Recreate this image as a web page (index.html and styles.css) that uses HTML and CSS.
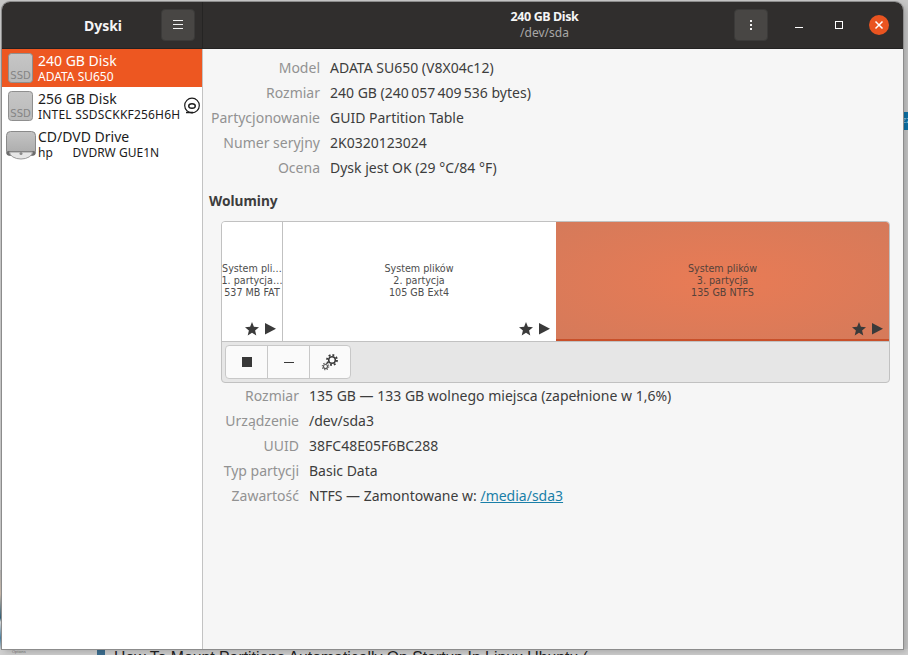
FILE: index.html
```html
<!DOCTYPE html>
<html lang="pl">
<head>
<meta charset="utf-8">
<title>Dyski</title>
<link rel="stylesheet" href="styles.css">
</head>
<body>
<div class="desktop">
  <div class="strip-blue">zz</div>
  <div class="strip-left"></div>
  <div class="strip-web"><span class="web-tools">Options</span><span class="web-title">How To Mount Partitions Automatically On Startup In Linux Ubuntu (</span></div>
  <div class="window">
    <header class="titlebar">
      <div class="tb-left">
        <span class="tb-name">Dyski</span>
        <button class="tb-btn">
          <svg width="16" height="16" viewBox="0 0 16 16"><path d="M3 3.500h10M3 7.500h10M3 11.500h10" stroke="#f2f2f2" stroke-width="1"/></svg>
        </button>
      </div>
      <div class="tb-right">
        <div class="tb-title"><div class="tb-main">240 GB Disk</div><div class="tb-sub">/dev/sda</div></div>
        <button class="tb-btn">
          <svg width="16" height="16" viewBox="0 0 16 16"><path d="M7 3h2v2H7zM7 7h2v2H7zM7 11h2v2H7z" fill="#f2f2f2"/></svg>
        </button>
        <div class="wm">
          <svg width="16" height="16" viewBox="0 0 16 16"><path d="M4 10.500h8" stroke="#fff" stroke-width="1"/></svg>
          <svg width="16" height="16" viewBox="0 0 16 16"><rect x="4.500" y="4.500" width="7" height="7" fill="none" stroke="#fff" stroke-width="1"/></svg>
          <span class="wm-close"><svg width="20" height="20" viewBox="0 0 20 20"><path d="M6.500 6.500l7 7M13.500 6.500l-7 7" stroke="#fff" stroke-width="1.500"/></svg></span>
        </div>
      </div>
    </header>
    <div class="panes">
      <aside class="sidebar">
        <div class="drive selected">
          <svg class="ic" width="30" height="30" viewBox="0 0 30 30"><defs><linearGradient id="g1" x1="0" y1="0" x2="0" y2="1"><stop offset="0" stop-color="#c6c6c6"/><stop offset="1" stop-color="#b9b9b9"/></linearGradient></defs><rect x="3.500" y=".5" width="24" height="29" rx="3" fill="url(#g1)" stroke="#8f8f8f"/><text x="15.500" y="26" text-anchor="middle" class="ssd">SSD</text></svg>
          <div class="dtext"><div class="d1">240 GB Disk</div><div class="d2">ADATA SU650</div></div>
        </div>
        <div class="drive">
          <svg class="ic" width="30" height="30" viewBox="0 0 30 30"><rect x="3.500" y=".5" width="24" height="29" rx="3" fill="url(#g1)" stroke="#8f8f8f"/><text x="15.500" y="26" text-anchor="middle" class="ssd">SSD</text></svg>
          <div class="dtext"><div class="d1">256 GB Disk</div><div class="d2 d2-wide">INTEL SSDSCKKF256H6H</div></div>
          <svg class="spin" width="18" height="18" viewBox="0 0 18 18"><circle cx="9" cy="8.500" r="7.300" fill="none" stroke="#1c1c1c" stroke-width="1.200"/><ellipse cx="9" cy="9" rx="3.300" ry="2.300" fill="none" stroke="#1c1c1c" stroke-width="1.400"/><path d="M3 15.500h7" stroke="#1c1c1c" stroke-width="1.300"/></svg>
        </div>
        <div class="drive">
          <svg class="ic ic-cd" width="32" height="32" viewBox="0 0 32 32"><defs><linearGradient id="g2" x1="0" y1="0" x2="0" y2="1"><stop offset="0" stop-color="#c4c4c4"/><stop offset="1" stop-color="#aaa"/></linearGradient></defs><rect x="1.500" y="3.500" width="29" height="24" rx="4" fill="url(#g2)" stroke="#8a8a8a"/><rect x="1.500" y="23" width="29" height="4.500" rx="2" fill="#6d6d6d"/><path d="M4.500 24A11.500 7 0 0 0 27.500 24z" fill="#e6e6e6" stroke="#9a9a9a"/><circle cx="16" cy="25.500" r="1.500" fill="#8a8a8a"/></svg>
          <div class="dtext"><div class="d1">CD/DVD Drive</div><div class="d2 pre">hp      DVDRW GUE1N</div></div>
        </div>
      </aside>
      <main class="content">
        <dl class="info info-disk">
          <dt>Model</dt><dd>ADATA SU650 (V8X04c12)</dd>
          <dt>Rozmiar</dt><dd>240 GB (240&#8201;057&#8201;409&#8201;536 bytes)</dd>
          <dt>Partycjonowanie</dt><dd>GUID Partition Table</dd>
          <dt>Numer seryjny</dt><dd>2K0320123024</dd>
          <dt>Ocena</dt><dd>Dysk jest OK (29 °C/84 °F)</dd>
        </dl>
        <h2 class="vol-head">Woluminy</h2>
        <section class="volumes">
          <div class="parts">
            <div class="part p1">
              <div class="ptext">System pli…<br>1. partycja…<br>537 MB FAT</div>
              <div class="pmarks"><svg width="32" height="14" viewBox="0 0 32 14"><use href="#marks"/></svg></div>
            </div>
            <div class="part p2">
              <div class="ptext">System plików<br>2. partycja<br>105 GB Ext4</div>
              <div class="pmarks"><svg width="32" height="14" viewBox="0 0 32 14"><use href="#marks"/></svg></div>
            </div>
            <div class="part p3">
              <div class="ptext">System plików<br>3. partycja<br>135 GB NTFS</div>
              <div class="pmarks"><svg width="32" height="14" viewBox="0 0 32 14"><use href="#marks"/></svg></div>
            </div>
          </div>
          <div class="vtools">
            <div class="btn-group">
              <button class="vbtn"><svg width="16" height="16" viewBox="0 0 16 16"><rect x="3" y="3" width="10" height="10" fill="#383838"/></svg></button>
              <button class="vbtn"><svg width="16" height="16" viewBox="0 0 16 16"><path d="M3 8.500h10" stroke="#383838" stroke-width="1"/></svg></button>
              <button class="vbtn"><svg width="18" height="18" viewBox="0 0 18 18"><circle cx="11" cy="7" r="3.300" fill="none" stroke="#3a3a3a" stroke-width="1.600"/><circle cx="11" cy="7" r="5" fill="none" stroke="#3a3a3a" stroke-width="1.800" stroke-dasharray="1.900 2"/><circle cx="4.500" cy="13.500" r="2" fill="none" stroke="#555" stroke-width="1.100"/><circle cx="4.500" cy="13.500" r="3.200" fill="none" stroke="#555" stroke-width="1.200" stroke-dasharray="1.200 1.300"/></svg></button>
            </div>
          </div>
        </section>
        <dl class="info info-vol">
          <dt>Rozmiar</dt><dd>135 GB — 133 GB wolnego miejsca (zapełnione w 1,6%)</dd>
          <dt>Urządzenie</dt><dd>/dev/sda3</dd>
          <dt>UUID</dt><dd>38FC48E05F6BC288</dd>
          <dt>Typ partycji</dt><dd>Basic Data</dd>
          <dt>Zawartość</dt><dd>NTFS — Zamontowane w: <a href="#">/media/sda3</a></dd>
        </dl>
      </main>
    </div>
  </div>
</div>
<svg class="defs" width="0" height="0"><defs><g id="marks"><path d="M7 0l1.900 4.800 5.100.4-3.900 3.300 1.200 5L7 10.800l-4.300 2.700 1.200-5L0 5.200l5.100-.4z" fill="#3a3a3a"/><path d="M20 1v11.500l11-5.750z" fill="#3a3a3a"/></g></defs></svg>
</body>
</html>
```
FILE: styles.css
```css
* { box-sizing: border-box; }
html, body { margin: 0; padding: 0; }
body { width: 908px; height: 655px; overflow: hidden; background: #c6c6c6; font-family: "Noto Sans", sans-serif; }
.desktop { position: relative; width: 908px; height: 655px; padding: 2px 0 0 2px; overflow: hidden; }
.defs { position: absolute; }
.strip-blue { position: absolute; right: 0; top: 112px; width: 8px; height: 18px; padding-left: 2px; background: #0c72a8; color: #8fc0da; font: 8px/18px "DejaVu Sans", sans-serif; overflow: hidden; }
.strip-left { position: absolute; left: 0; top: 570px; width: 2px; height: 80px; background: linear-gradient(#b0b0b0, #c8b8a8 30%, #2f5f78 60%, #d8d8d8 65%, #4a7fa0 85%, #ccc); }
.strip-web { position: absolute; left: 0; bottom: 0; width: 908px; height: 6px; display: flex; overflow: hidden; background: #cfcfcf; }
.web-tools { width: 97px; font: 4px/6px "Liberation Sans", sans-serif; color: #777; padding-left: 12px; }
.web-title { border-left: 8px solid #3c6e90; padding: 1px 0 0 9px; font: 15.800px/16px "Liberation Sans", sans-serif; color: #222; white-space: nowrap; }
.window { position: relative; width: 901px; height: 647px; border-radius: 8px 8px 0 0; display: flex; flex-direction: column; overflow: hidden; background: #f6f6f6; box-shadow: 0 0 0 1px #8c8c8c, 3px 3px 6px rgba(0,0,0,.18); }

.titlebar { height: 47px; flex: none; display: flex; background: #302e2d; color: #f5f5f5; border-bottom: 1px solid #232222; }
.tb-left { width: 201px; flex: none; display: flex; align-items: center; border-right: 1px solid #252423; padding-right: 7px; }
.tb-name { flex: 1; text-align: center; font-size: 14px; font-weight: 700; padding-left: 43px; }
.tb-btn { width: 34px; height: 32px; flex: none; padding: 0; border: 1px solid #3b3a39; border-radius: 4px; background: #484644; display: flex; align-items: center; justify-content: center; }
.tb-right { flex: 1; display: flex; align-items: center; }
.tb-title { flex: 1; text-align: center; line-height: 16px; padding-left: 152px; }
.tb-main { font-size: 12.500px; font-weight: 700; letter-spacing: -.4px; }
.tb-sub { font-size: 12px; color: #a9a8a7; }
.wm { flex: none; display: flex; align-items: center; width: 135px; padding-left: 23px; gap: 24px; }
.wm-close { width: 20px; height: 20px; border-radius: 50%; background: #e95420; display: block; margin-left: -2px; }
.wm-close svg { display: block; }

.panes { flex: 1; display: flex; min-height: 0; }
.sidebar { width: 201px; flex: none; background: #fff; border-right: 1px solid #c3c3c3; }
.drive { height: 38px; display: flex; align-items: center; padding-left: 3px; color: #1b1b1b; position: relative; }
.drive.selected { background: #ed5721; color: #fff; }
.ic { flex: none; margin-right: 3px; }
.ic-cd { margin-left: 0; margin-right: 1px; }
.ssd { font: 10px "DejaVu Sans", sans-serif; fill: #858585; }
.dtext { white-space: nowrap; }
.d1 { font-size: 14px; line-height: 18px; }
.d2 { font-size: 12px; line-height: 14px; }
.d2-wide { letter-spacing: .2px; }
.pre { white-space: pre; word-spacing: .17px; }
.spin { position: absolute; left: 181px; top: 10px; }

.content { flex: 1; padding: 6px 13px 0 6px; color: #3d3d3d; }
.info { display: grid; margin: 0; font-size: 14px; line-height: 25px; }
.info dt { text-align: right; color: #929292; }
.info dd { margin: 0; color: #3d3d3d; white-space: nowrap; }
.info-disk { grid-template-columns: 111px 1fr; column-gap: 10px; }
.info-vol { grid-template-columns: 78px 1fr; column-gap: 10px; margin-left: 12px; }
.info a { color: #1a7fa8; }
.vol-head { margin: 12px 0 11px; font-size: 13.700px; line-height: 18px; font-weight: 700; color: #3d3d3d; }

.volumes { margin-left: 12px; height: 162px; border: 1px solid #c1c1c1; border-radius: 4px; background: #e6e6e6; overflow: hidden; }
.parts { height: 120px; display: flex; background: #fff; border-bottom: 1px solid #c1c1c1; }
.part { position: relative; display: flex; align-items: center; justify-content: center; text-align: center; font: 9.600px/12px "DejaVu Sans", sans-serif; color: #4d4d4d; padding-bottom: 1px; }
.p1 { width: 61px; border-right: 1px solid #c1c1c1; }
.p2 { width: 273px; padding-right: 1px; }
.p3 { flex: 1; color: #55423a; background: radial-gradient(ellipse at center, #e97b55, #d57a5a); border-bottom: 2px solid #c8502a; padding-top: 1px; padding-bottom: 0; }
.ptext { white-space: nowrap; }
.pmarks { position: absolute; right: 5px; bottom: 5px; height: 14px; }
.p3 .pmarks { bottom: 3px; }
.pmarks svg { display: block; }
.vtools { padding: 3px; }
.btn-group { display: inline-flex; height: 34px; border: 1px solid #c8c8c8; border-radius: 4px; background: #fafafa; overflow: hidden; }
.vbtn { width: 42px; padding: 0; border: 0; border-right: 1px solid #c8c8c8; background: transparent; display: flex; align-items: center; justify-content: center; }
.vbtn:last-child { width: 40px; border-right: 0; }
```
